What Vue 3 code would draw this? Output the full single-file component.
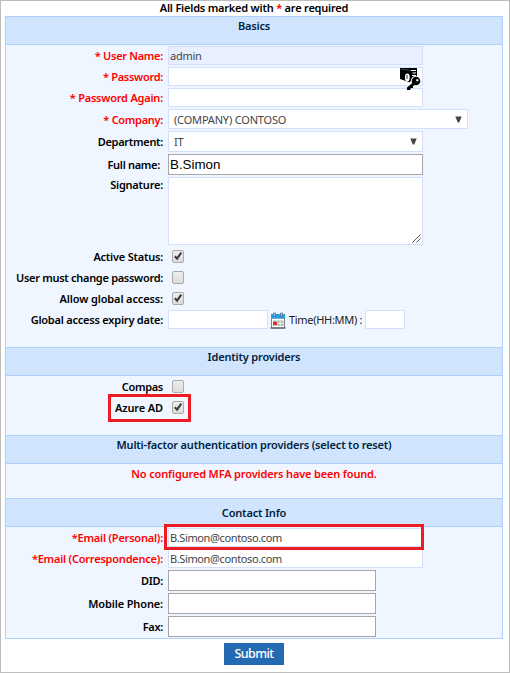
<script setup>
import { ref } from 'vue'

const basics = ref([
  { label: '* User Name:', type: 'text', value: 'admin', required: true, cls: 'filled', row: 'tight' },
  { label: '* Password:', type: 'text', value: '', required: true, key: true, row: 'tight' },
  { label: '* Password Again:', type: 'text', value: '', required: true },
  { label: '* Company:', type: 'select', value: '(COMPANY) CONTOSO', required: true, cls: 'company', row: 'tight' },
  { label: 'Department:', type: 'select', value: 'IT', cls: 'department', row: 'tight' },
  { label: 'Full name:', type: 'text', value: 'B.Simon', cls: 'plain', row: 'fullname tight' },
  { label: 'Signature:', type: 'area', value: '', row: 'signature' },
  { label: 'Active Status:', type: 'check', value: true },
  { label: 'User must change password:', type: 'check', value: false, row: 'tight' },
  { label: 'Allow global access:', type: 'check', value: true, row: 'loose' },
  { label: 'Global access expiry date:', type: 'date', value: '' }
])
const providers = ref([
  { label: 'Compas', type: 'check', value: false, row: 'tight' },
  { label: 'Azure AD', type: 'check', value: true, mark: 'mark-check', row: 'loose' }
])
const contact = ref([
  { label: '*Email (Personal):', type: 'text', value: 'B.Simon@contoso.com', required: true, mark: 'mark-email', cls: 'email' },
  { label: '*Email (Correspondence):', type: 'text', value: 'B.Simon@contoso.com', required: true, cls: 'email' },
  { label: 'DID:', type: 'text', value: '', cls: 'plain short', row: 'tight' },
  { label: 'Mobile Phone:', type: 'text', value: '', cls: 'plain short', row: 'loose' },
  { label: 'Fax:', type: 'text', value: '', cls: 'plain short', row: 'tight' }
])
const sections = [
  { title: 'Basics', rows: basics, cls: 's-basics' },
  { title: 'Identity providers', rows: providers, cls: 's-identity' },
  { title: 'Multi-factor authentication providers (select to reset)', rows: ref([]), note: 'No configured MFA providers have been found.', cls: 's-mfa' },
  { title: 'Contact Info', rows: contact, cls: 's-contact' }
]
</script>

<template>
  <main class="page">
    <p class="hint">All Fields marked with <span class="star">*</span> are required</p>
    <form class="panel" @submit.prevent>
      <section v-for="s in sections" :key="s.title" :class="s.cls">
        <h2><span>{{ s.title }}</span></h2>
        <div class="body">
          <p v-if="s.note" class="note">{{ s.note }}</p>
          <div v-for="r in s.rows.value" :key="r.label" class="row" :class="[r.row, r.mark]">
            <div class="label" :class="{ required: r.required }"><span>{{ r.label }}</span></div>
            <div v-if="r.type === 'text'" class="holder">
              <input v-model="r.value" type="text" class="field" :class="r.cls" spellcheck="false">
              <svg v-if="r.key" class="key" viewBox="0 0 21 23">
                <path d="M0 1h17v9h-4l-3 5.500L0 12z" fill="#000" />
                <path d="M11 3.500h5M12.500 6h3.500M12 8.500h4" stroke="#fff" stroke-width="1.200" />
                <path d="M1 2l9 1.500" fill="none" stroke="#777" stroke-width=".6" />
                <ellipse cx="7.300" cy="10.500" rx="2.400" ry="4" fill="#fff" />
                <path d="M7 8v4" stroke="#333" stroke-width="1" />
                <path d="M8.500 20l6-6" stroke="#fff" stroke-width="5" />
                <circle cx="16" cy="14" r="5.200" fill="#fff" />
                <circle cx="16" cy="14" r="4.300" fill="#000" />
                <path d="M13.500 15l-6.500 5.500V23h3l1-2h2v-2l3.500-2z" fill="#000" />
                <circle cx="17.300" cy="13.200" r="1.200" fill="#ddd" />
              </svg>
            </div>
            <div v-else-if="r.type === 'select'" class="field select" :class="r.cls" role="combobox">
              <span>{{ r.value }}</span>
              <svg class="arrow" viewBox="0 0 7 7"><path d="M.3.500h6.400L4.200 6.500H2.800z" fill="#444" /></svg>
            </div>
            <div v-else-if="r.type === 'area'" class="field area" role="textbox">
              <svg class="grip" viewBox="0 0 9 9"><path d="M.5 8.500l8-8M4.500 8.500l4-4" stroke="#555" stroke-width="1" /></svg>
            </div>
            <div v-else-if="r.type === 'check'" class="check" role="checkbox" :aria-checked="r.value" @click="r.value = !r.value">
              <svg v-if="r.value" viewBox="0 0 10 10"><path d="M1.800 5.300l2.300 2.300 4.200-6" fill="none" stroke="#3c3c3c" stroke-width="2.100" /></svg>
            </div>
            <div v-else class="date">
              <input v-model="r.value" type="text" class="field">
              <svg class="calendar" viewBox="0 0 16 17">
                <path d="M1.500 6v10h13V6z" fill="#fff" stroke="#7b858c" />
                <path d="M.5 16h15" stroke="#555" stroke-width="1.200" />
                <path d="M1 2h14v4.500H1z" fill="#279ce3" />
                <path d="M3.500 1h2v3h-2zM10.500 1h2v3h-2z" fill="#9fd0ee" stroke="#58778c" stroke-width=".8" />
                <path d="M3 8.500h10.500V14H3z" fill="#a9b9b0" />
                <path d="M3 11.300h10.500M6.800 8.500V14M10.200 8.500V14" stroke="#fff" stroke-width=".8" />
                <path d="M3 9.800h4v3H3z" fill="#e3252b" />
              </svg>
              <span class="time">Time(HH:MM) :</span>
              <input type="text" class="field hours">
            </div>
          </div>
        </div>
      </section>
    </form>
    <button class="submit" type="button"><span>Submit</span></button>
  </main>
</template>

<style>
body { margin: 0; background: #fff; }
</style>

<style scoped>
* { box-sizing: border-box; }
.page {
  width: 510px;
  height: 673px;
  border: 1px solid #bdbdbd;
  padding: 0 6px 0 4px;
  display: flex;
  flex-direction: column;
  align-items: center;
  background: #fff;
  font-family: "Noto Sans", "Open Sans", sans-serif;
  font-size: 11px;
  color: #000;
}
.hint { margin: 0; height: 15px; line-height: 13px; font-weight: 600; font-size: 11px; letter-spacing: -.21px; }
.star { color: #f00; }
.panel { width: 498px; height: 623px; flex: none; border: 1px solid #add0fc; background: #eff6ff; }
h2 {
  margin: 0;
  height: 28px;
  border-bottom: 1px solid #add0fc;
  background: #d0e4fe;
  text-align: center;
  font-size: 11px;
  line-height: 18px;
  font-weight: 600;
  color: #001e3c;
  letter-spacing: -.18px;
}
section + section h2 { height: 29px; border-top: 1px solid #add0fc; }
.s-basics .body { height: 302px; }
.s-identity .body { height: 59px; }
.s-mfa .body { height: 34px; }
.s-contact h2 { line-height: 27px; }
.body { padding-top: 1px; display: flex; flex-direction: column; gap: 2px; }
.note { margin: 0; text-align: center; color: #f00; font-weight: 600; line-height: 17px; letter-spacing: -.16px; }
.row { position: relative; display: flex; align-items: center; min-height: 19px; }
.label {
  width: 162px;
  padding-right: 5px;
  text-align: right;
  font-weight: 600;
  line-height: 19px;
  white-space: nowrap;
  letter-spacing: -.22px;
}
.tight .label { letter-spacing: -.3px; }
.loose .label { letter-spacing: -.13px; }
.required { color: #f00; }
.fullname .label { padding-right: 8px; }
.signature { align-items: flex-start; }
.signature .label { line-height: 16px; }
.holder { display: flex; position: relative; }
.field {
  display: block;
  width: 255px;
  height: 19px;
  margin: 0;
  padding: 0 1px;
  border: 1px solid #d2dfff;
  border-radius: 0;
  background: #fff;
  color: #444;
  font: 11px "Noto Sans", sans-serif;
  letter-spacing: -.25px;
  outline: none;
}
.filled { background: #e8effe; }
.email { letter-spacing: -.37px; }
.plain { height: 21px; border-color: #a6a6a6; color: #000; font: 13.33px "Liberation Sans", sans-serif; letter-spacing: 0; }
.short { width: 208px; }
.select { display: flex; align-items: center; justify-content: space-between; padding: 0 5px; letter-spacing: -.18px; }
.company { width: 300px; height: 20px; }
.department { height: 21px; }
.arrow { width: 7px; height: 7px; }
.area { height: 68px; display: flex; align-items: flex-end; justify-content: flex-end; padding: 1px; }
.grip { width: 9px; height: 9px; }
.key { position: absolute; left: 232px; top: 0; width: 21px; height: 23px; z-index: 1; }
.check {
  width: 12px;
  height: 13px;
  margin-left: 4px;
  border: 1px solid #aaa;
  border-radius: 2px;
  background: linear-gradient(#eee, #dcdcdc);
}
.check svg { display: block; width: 10px; height: 10px; }
.date { display: flex; align-items: center; }
.date .field { width: 100px; }
.calendar { width: 16px; height: 17px; margin: 2px 3px 0 2px; }
.time { width: 76px; white-space: nowrap; color: #222; letter-spacing: -.3px; }
.date .hours { width: 40px; }
.mark-check::after, .mark-email::after {
  content: "";
  position: absolute;
  box-sizing: border-box;
  border: 3px solid #ed1c24;
  pointer-events: none;
}
.mark-check::after { left: 102px; top: -4px; width: 83px; height: 28px; }
.mark-email::after { left: 158px; top: -4px; width: 260px; height: 26px; z-index: 1; }
.submit {
  width: 60px;
  height: 22px;
  margin: 4px 0 0;
  padding: 0;
  border: 0;
  background: #246ab3;
  color: #fff;
  font: 500 12.5px/22px "Noto Sans", sans-serif;
  letter-spacing: -.6px;
}
</style>
